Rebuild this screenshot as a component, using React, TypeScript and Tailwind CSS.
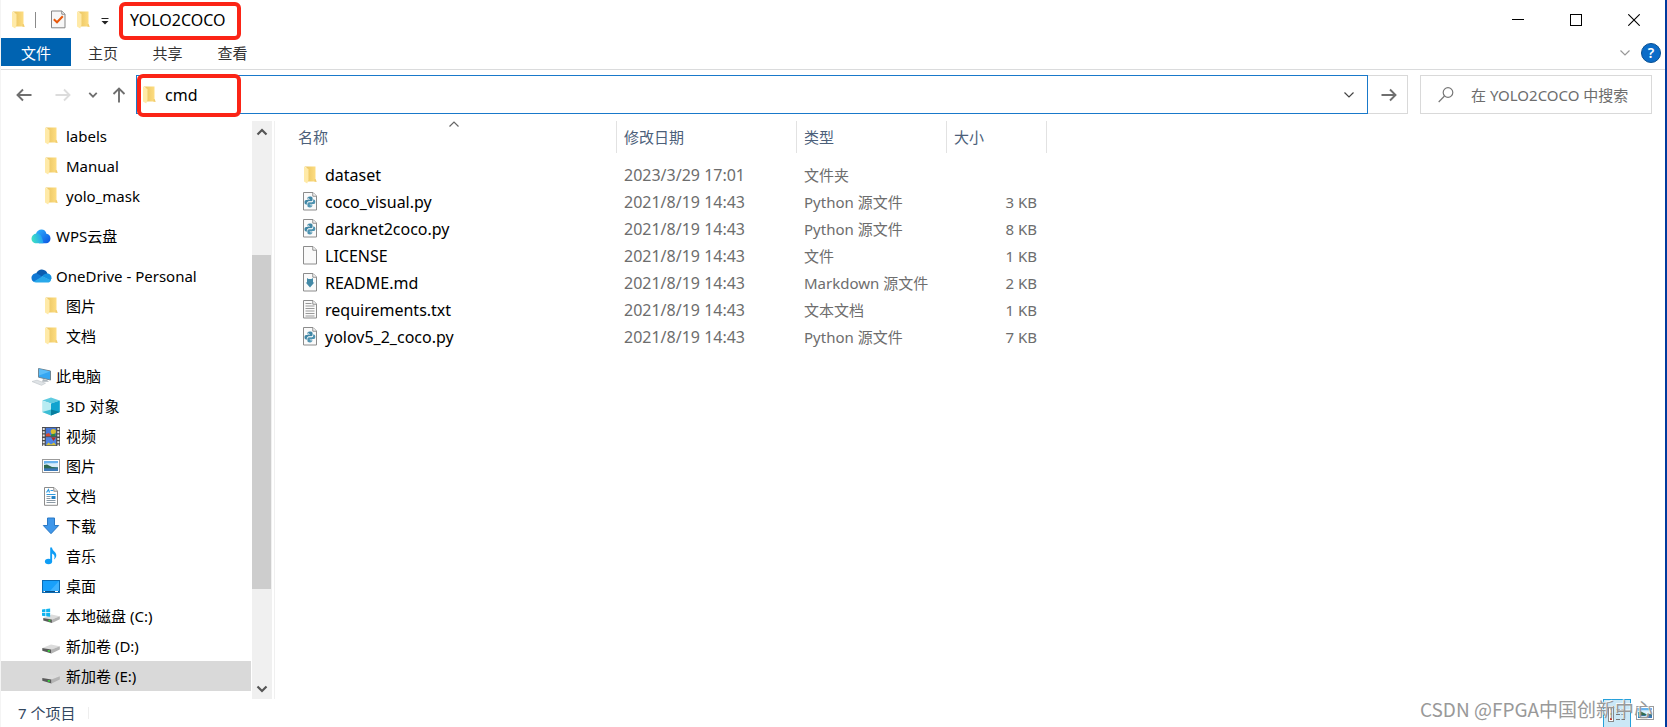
import type { ReactNode } from "react";

function FolderIcon() {
  return (
    <svg width="13" height="18" viewBox="0 0 13 18" aria-hidden="true">
      <defs>
        <linearGradient id="folderBack" x1="0" x2="1">
          <stop offset="0" stopColor="#e8c25c" />
          <stop offset="1" stopColor="#ffdf85" />
        </linearGradient>
      </defs>
      <path d="M0.5 0.5H11.5V13.5L12.5 15.5H3V2Z" fill="url(#folderBack)" />
      <path d="M0 0.5L4.5 3V14L3.2 17.5L0 15.5Z" fill="#ffeaa8" />
      <path d="M11.5 13L12.7 15.7H10.5V13Z" fill="#f0cb6c" />
    </svg>
  );
}

function PageIcon({ children }: { children?: ReactNode }) {
  return (
    <svg width="16" height="19" viewBox="0 0 16 19" aria-hidden="true">
      <path d="M1.5 0.5H11L14.5 4V18H1.5Z" fill="#fafafa" stroke="#8c8c8c" />
      <path d="M10.8 0.8V4.2H14.3" fill="#fff" stroke="#8c8c8c" />
      {children}
    </svg>
  );
}

function PythonIcon() {
  return (
    <PageIcon>
      <g transform="translate(2.5 4.6) scale(0.45)">
        <path
          d="M11.9 0C7.5 0 6.7 1.8 6.7 3.6V6.3H12.4V7.3H4C1.6 7.3 0 9.3 0 12.4S1.6 17.4 3.8 17.4H6V14.3C6 12 7.8 10.3 10 10.3H15.3C17 10.3 18 9 18 7.3V3.6C18 1.5 16 0 11.9 0Z"
          fill="#3f86a5"
        />
        <path
          d="M12.1 24C16.5 24 17.3 22.2 17.3 20.4V17.7H11.6V16.7H20C22.4 16.7 24 14.7 24 11.6S22.4 6.6 20.2 6.6H19V9.7C19 12 17.2 12.4 14 12.4H9.5C7.5 12.4 6.5 14 6.5 16.7V20.4C6.5 22.5 8 24 12.1 24Z"
          fill="#4f93b0"
        />
        <circle cx="9.3" cy="3.6" r="1.2" fill="#fff" />
        <circle cx="14.7" cy="20.4" r="1.2" fill="#fff" />
        <path d="M5.5 16C6 12 8.5 11.3 11 11.3H15.5C18 11.3 18.6 9 18.6 7" fill="none" stroke="#fff" strokeWidth="1" />
      </g>
    </PageIcon>
  );
}

function MarkdownIcon() {
  return (
    <PageIcon>
      <path d="M5 5L6.5 6H9.5L11 5V9.5H12.3L8 14.6L3.7 9.5H5Z" fill="#4389a6" />
    </PageIcon>
  );
}

function TextIcon() {
  return (
    <PageIcon>
      <path d="M3.5 3.5H9.5M3.5 6H12.5M3.5 8.5H12.5M3.5 11H12.5M3.5 13.5H12.5M3.5 16H12.5" stroke="#9a9a9a" />
    </PageIcon>
  );
}

function CheckPageIcon() {
  return (
    <svg width="16" height="19" viewBox="0 0 16 19" aria-hidden="true">
      <path d="M0.5 1H11L14 4V17.8H0.5Z" fill="#f7f7f7" stroke="#858585" />
      <path d="M10.8 1V4.2H14" fill="#fff" stroke="#858585" />
      <path d="M2.8 9.2L6 12.3L11.8 6.2" fill="none" stroke="#e8590c" strokeWidth="2" />
    </svg>
  );
}

function WpsIcon() {
  return (
    <svg width="20" height="15" viewBox="0 0 20 15" aria-hidden="true">
      <defs>
        <linearGradient id="wpsRight" x1="0" y1="0" x2="1" y2="1">
          <stop offset="0" stopColor="#2fb4ff" />
          <stop offset="1" stopColor="#0b52e0" />
        </linearGradient>
        <linearGradient id="wpsLeft" x1="0" y1="0.6" x2="1" y2="0.4">
          <stop offset="0" stopColor="#3fe3c2" />
          <stop offset="1" stopColor="#1f9cf8" />
        </linearGradient>
      </defs>
      <path d="M5 5C5.5 2 8 0.5 10.5 0.5C13 0.5 15 2 15.4 4.8C18 5.2 19.5 7 19.5 9.5C19.5 12.5 17.5 14.3 15 14.3H8Z" fill="url(#wpsRight)" />
      <path d="M5.5 4.5C8.5 4 11 6 12.5 14.3H5.5C2.5 14.3 0.5 12.3 0.5 9.5C0.5 7 2.5 4.8 5.5 4.5Z" fill="url(#wpsLeft)" />
    </svg>
  );
}

function OneDriveIcon() {
  return (
    <svg width="21" height="14" viewBox="0 0 21 14" aria-hidden="true">
      <path d="M5 4.5C6.5 1.5 9 0.3 11 0.5C13.8 0.7 15.8 2.2 16.5 4.8L10 8Z" fill="#0a5cb0" />
      <path d="M0.5 9C0.4 6.3 2.8 4 5.5 4.2L12 8L3 13C1.5 12.3 0.5 10.8 0.5 9Z" fill="#0f78d4" />
      <path d="M16.3 4.6C18.8 4.6 20.6 6.8 20.5 9.2L19.5 11.5L11 7.5C12.5 5.5 14 4.6 16.3 4.6Z" fill="#1490df" />
      <path d="M11.5 7.3L20 11.2C19.4 12.8 18.2 13.5 16.6 13.5H5C4.2 13.5 3.2 13.2 2.5 12.7Z" fill="#28a8ea" />
    </svg>
  );
}

function ComputerIcon() {
  return (
    <svg width="21" height="20" viewBox="-1 -2 21 20" aria-hidden="true">
      <path d="M6.5 0.5L18.5 3V12L6.5 9.2Z" fill="#35a6f2" stroke="#6f8796" />
      <path d="M7 1L18 3.4L7 7.5Z" fill="#5cbdf8" />
      <path d="M11 11L15 12L17 13.8H10Z" fill="#aeb6bc" />
      <path d="M0 13.5L5 12.2L13.5 15.2L9.5 17.3Z" fill="#dfe3e6" stroke="#c3c9cd" strokeWidth="0.7" />
    </svg>
  );
}

function CubeIcon() {
  return (
    <svg width="18" height="19" viewBox="0 0 18 19" aria-hidden="true">
      <path d="M0.2 3.5L9 0.4L17.8 3.5L9 6.5Z" fill="#5fcbe0" />
      <path d="M0.2 3.5L9 6.5V18.6L0.2 15Z" fill="#b8ecf2" />
      <path d="M17.8 3.5L9 6.5V18.6L17.8 15Z" fill="#10a3cf" />
      <path d="M0.2 15L9 12.5V18.6Z" fill="#3dbdd4" />
      <path d="M17.8 15L9 12.5V18.6Z" fill="#087e9e" />
    </svg>
  );
}

function VideoIcon() {
  return (
    <svg width="18" height="19" viewBox="0 0 18 19" aria-hidden="true">
      <rect width="18" height="19" fill="#4a4a4a" />
      <path d="M1.7 1V19M16.3 1V19" stroke="#e4e4e4" strokeWidth="2" strokeDasharray="2 1.3" />
      <rect x="3.8" y="0.8" width="10.4" height="8.4" fill="#4677d8" />
      <rect x="3.8" y="10.2" width="10.4" height="8" fill="#4f84e3" />
      <path d="M4 9.2V7L7 6L9 9.2Z" fill="#d94a2e" />
      <circle cx="11.3" cy="4.5" r="2.6" fill="#d9bd2f" />
      <path d="M9 7.5L13.5 6.5V9.2H9Z" fill="#2b8a3e" />
      <path d="M9 10.2L14 10.5L11.5 14Z" fill="#b52d22" />
      <path d="M4 18.2L6.5 15.5L9 17.5L12 15.5L14.2 18.2Z" fill="#d6c23a" />
    </svg>
  );
}

function PictureIcon() {
  return (
    <svg width="18" height="14" viewBox="0 0 18 14" aria-hidden="true">
      <rect x="0.5" y="0.5" width="17" height="13" fill="#fff" stroke="#9b9b9b" />
      <rect x="2" y="2" width="14" height="10" fill="#6ab4ee" />
      <path d="M2 5C5 3.5 8 5 16 4V8H2Z" fill="#d8eefb" />
      <path d="M2 6L5 5.5L10 8L16 8.6V10H2Z" fill="#2f6b52" />
      <path d="M2 9.3H16V12H2Z" fill="#3b79b8" />
    </svg>
  );
}

function DocumentIcon() {
  return (
    <svg width="16" height="19" viewBox="0 0 16 19" aria-hidden="true">
      <path d="M1.5 0.5H11L14.5 4V18.3H1.5Z" fill="#fff" stroke="#8c8c8c" />
      <path d="M10.8 0.8V4.2H14.3" fill="#eee" stroke="#8c8c8c" />
      <path d="M3.5 5.5L5.5 2.5L6.5 5.5M7.5 3.5H10M3.5 7.5H12.5" fill="none" stroke="#2f9be0" strokeWidth="1.2" />
      <path d="M3.5 9.5H7.5M3.5 11.5H7.5M3.5 13.5H12.5M3.5 15.5H12.5" stroke="#8c9aa5" />
      <rect x="8.5" y="9" width="4" height="3" fill="#2583c5" />
    </svg>
  );
}

function DownloadIcon() {
  return (
    <svg width="18" height="18" viewBox="0 0 18 18" aria-hidden="true">
      <path d="M5.5 1H12.5V8.5H16.7L9 16.7L1.3 8.5H5.5Z" fill="#3f97ea" stroke="#2a78c4" />
    </svg>
  );
}

function MusicIcon() {
  return (
    <svg width="18" height="18" viewBox="0 0 18 18" aria-hidden="true">
      <ellipse cx="6.5" cy="14.5" rx="3.6" ry="2.8" fill="#0f9df5" />
      <path d="M8.2 0.5H10C10.3 4 14.5 5 14.3 8.5C14.2 10.3 13.3 11.5 12 12.5C13.2 9.5 12.5 7.5 10.1 6.5V14.5H8.2Z" fill="#0f9df5" />
    </svg>
  );
}

function DesktopIcon() {
  return (
    <svg width="18" height="13" viewBox="0 0 18 13" aria-hidden="true">
      <rect x="0.5" y="0.5" width="17" height="12" fill="#18a0fb" stroke="#0b6cb5" />
      <path d="M8 11L17 1V11Z" fill="#3db2ff" />
      <path d="M1 11.5H17" stroke="#0a4f86" />
      <path d="M1.5 11.5H3M13 11.5H16" stroke="#fff" />
    </svg>
  );
}

function DriveBody() {
  return (
    <>
      <path d="M0.3 9L9 5.5L17.8 7.2L9.5 10.6Z" fill="#dcdcdc" />
      <path d="M0.3 9L9.5 10.6V14.5L0.3 11.8Z" fill="#5a5a5a" />
      <path d="M9.5 10.6L17.8 7.2V10.5L9.5 14.5Z" fill="#b4b4b4" />
      <rect x="5.8" y="11" width="2" height="1.8" fill="#35d63b" />
    </>
  );
}

function DriveIcon() {
  return (
    <svg width="18" height="16" viewBox="0 -1 18 16" aria-hidden="true">
      <DriveBody />
    </svg>
  );
}

function SystemDriveIcon() {
  return (
    <svg width="19" height="16" viewBox="-1 -1 19 16" aria-hidden="true">
      <DriveBody />
      <path d="M-1 0.2L2.6 -0.3V3H-1ZM3.4 -0.4L7.6 -1V3H3.4ZM-1 3.8H2.6V7.2L-1 6.7ZM3.4 3.8H7.6V7.8L3.4 7.3Z" fill="#10b4ef" />
    </svg>
  );
}

function Chevron({ up = false, bold = false, className = "" }: { up?: boolean; bold?: boolean; className?: string }) {
  return (
    <svg width="12" height="8" viewBox="0 0 12 8" fill="none" className={className} aria-hidden="true">
      <path d={up ? "M1.5 6.5L6 2L10.5 6.5" : "M1.5 1.5L6 6L10.5 1.5"} stroke="currentColor" strokeWidth={bold ? 2.2 : 1.2} />
    </svg>
  );
}

function Arrow({ className = "" }: { className?: string }) {
  return (
    <svg width="16" height="14" viewBox="0 0 16 14" fill="none" className={className} aria-hidden="true">
      <path d="M0.5 7H14.5M9 1.5L14.5 7L9 12.5" stroke="currentColor" strokeWidth="1.9" />
    </svg>
  );
}

type NavItem = { label: string; icon: ReactNode; top?: boolean; spaced?: boolean; selected?: boolean };

const navItems: NavItem[] = [
  { label: "labels", icon: <FolderIcon /> },
  { label: "Manual", icon: <FolderIcon /> },
  { label: "yolo_mask", icon: <FolderIcon /> },
  { label: "WPS云盘", icon: <WpsIcon />, top: true, spaced: true },
  { label: "OneDrive - Personal", icon: <OneDriveIcon />, top: true, spaced: true },
  { label: "图片", icon: <FolderIcon /> },
  { label: "文档", icon: <FolderIcon /> },
  { label: "此电脑", icon: <ComputerIcon />, top: true, spaced: true },
  { label: "3D 对象", icon: <CubeIcon /> },
  { label: "视频", icon: <VideoIcon /> },
  { label: "图片", icon: <PictureIcon /> },
  { label: "文档", icon: <DocumentIcon /> },
  { label: "下载", icon: <DownloadIcon /> },
  { label: "音乐", icon: <MusicIcon /> },
  { label: "桌面", icon: <DesktopIcon /> },
  { label: "本地磁盘 (C:)", icon: <SystemDriveIcon /> },
  { label: "新加卷 (D:)", icon: <DriveIcon /> },
  { label: "新加卷 (E:)", icon: <DriveIcon />, selected: true },
];

const files = [
  { name: "dataset", icon: <FolderIcon />, date: "2023/3/29 17:01", type: "文件夹", size: "" },
  { name: "coco_visual.py", icon: <PythonIcon />, date: "2021/8/19 14:43", type: "Python 源文件", size: "3 KB" },
  { name: "darknet2coco.py", icon: <PythonIcon />, date: "2021/8/19 14:43", type: "Python 源文件", size: "8 KB" },
  { name: "LICENSE", icon: <PageIcon />, date: "2021/8/19 14:43", type: "文件", size: "1 KB" },
  { name: "README.md", icon: <MarkdownIcon />, date: "2021/8/19 14:43", type: "Markdown 源文件", size: "2 KB" },
  { name: "requirements.txt", icon: <TextIcon />, date: "2021/8/19 14:43", type: "文本文档", size: "1 KB" },
  { name: "yolov5_2_coco.py", icon: <PythonIcon />, date: "2021/8/19 14:43", type: "Python 源文件", size: "7 KB" },
];

function TitleBar() {
  return (
    <header className="flex h-[38px] items-center">
      <div className="flex items-center pt-px pl-[11px]">
        <FolderIcon />
        <span className="ml-[10px] h-4 w-px bg-[#8a8a8a]" />
        <button aria-label="属性" className="ml-[15px]"><CheckPageIcon /></button>
        <button aria-label="新建文件夹" className="ml-[10px]"><FolderIcon /></button>
        <button aria-label="自定义快速访问工具栏" className="ml-[11px] pt-1">
          <svg width="8" height="7" viewBox="0 0 8 7" aria-hidden="true">
            <path d="M0.5 0.5H7.5" stroke="#222" />
            <path d="M0.5 3H7.5L4 6.5Z" fill="#222" />
          </svg>
        </button>
      </div>
      <div className="relative ml-[10px] flex h-[38px] w-[122px] items-center pt-px pl-[11px]">
        <h1 className="text-base text-black">YOLO2COCO</h1>
        <span className="pointer-events-none absolute inset-x-0 top-0.5 bottom-[-2px] rounded-md border-4 border-[#fb2416]" />
      </div>
      <div className="ml-auto flex pt-px pr-0.5">
        <button aria-label="最小化" className="flex h-9 w-[58px] items-center justify-center">
          <svg width="12" height="12" viewBox="0 0 12 12" aria-hidden="true"><path d="M0 5.5H12" stroke="#000" /></svg>
        </button>
        <button aria-label="最大化" className="flex h-9 w-[58px] items-center justify-center">
          <svg width="12" height="12" viewBox="0 0 12 12" aria-hidden="true"><rect x="0.5" y="0.5" width="11" height="11" fill="none" stroke="#000" /></svg>
        </button>
        <button aria-label="关闭" className="flex h-9 w-[58px] items-center justify-center">
          <svg width="12" height="12" viewBox="0 0 12 12" aria-hidden="true"><path d="M0.3 0.3L11.7 11.7M11.7 0.3L0.3 11.7" stroke="#000" strokeWidth="1.1" /></svg>
        </button>
      </div>
    </header>
  );
}

function RibbonTabs() {
  return (
    <nav className="flex h-8 items-start border-b border-[#dadbdc]">
      <button className="h-7 w-[70px] bg-[#0063b1] pt-0.5 text-white">文件</button>
      <button className="h-7 w-16 pt-0.5 text-[#333]">主页</button>
      <button className="h-7 w-[65px] pt-0.5 text-[#333]">共享</button>
      <button className="h-7 w-[65px] pt-0.5 text-[#333]">查看</button>
      <div className="ml-auto flex items-center gap-[9px] pt-[5px] pr-1">
        <button aria-label="展开功能区" className="text-[#999]"><Chevron className="w-3.5" /></button>
        <button aria-label="帮助" className="flex size-5 items-center justify-center rounded-full border border-[#084f92] bg-[#0b6cc8] text-sm font-semibold text-white">?</button>
      </div>
    </nav>
  );
}

function AddressRow() {
  return (
    <div className="flex items-center pt-[5px] pr-[13px] pb-[7px] text-[#6f6f6f]">
      <div className="flex w-[135px] items-center pl-[15px]">
        <button aria-label="后退"><Arrow className="rotate-180" /></button>
        <button aria-label="前进" className="ml-[23px] text-[#dcdcdc]"><Arrow /></button>
        <button aria-label="最近浏览的位置" className="ml-[17px]"><Chevron className="w-[10px]" bold /></button>
        <button aria-label="上移" className="ml-[13px] pt-px"><Arrow className="-rotate-90" /></button>
      </div>
      <div className="relative flex h-[39px] flex-1 items-center border border-[#1979ca]">
        <label htmlFor="address" className="pl-1.5"><FolderIcon /></label>
        <input id="address" aria-label="地址" defaultValue="cmd" className="ml-[9px] min-w-0 flex-1 bg-transparent text-base text-black outline-none" />
        <button aria-label="上一个位置" className="mr-3 text-[#444]"><Chevron /></button>
        <span className="pointer-events-none absolute -top-0.5 -bottom-1 left-0 w-[104px] rounded-md border-4 border-[#fb2416]" />
      </div>
      <button aria-label="转到" className="flex h-[39px] w-10 items-center justify-center border border-l-0 border-[#d9d9d9] pl-0.5"><Arrow /></button>
      <div className="ml-3 flex h-[39px] w-[232px] items-center border border-[#d9d9d9]">
        <label htmlFor="search" className="pl-[17px]">
          <svg width="16" height="16" viewBox="0 0 16 16" fill="none" stroke="#777" strokeWidth="1.2" aria-hidden="true">
            <circle cx="10" cy="5.5" r="4.8" />
            <path d="M6.5 9L0.7 15" />
          </svg>
        </label>
        <input id="search" aria-label="搜索" placeholder="在 YOLO2COCO 中搜索" className="ml-[17px] min-w-0 flex-1 bg-transparent outline-none placeholder:text-[#6d6d6d]" />
      </div>
    </div>
  );
}

function Sidebar() {
  return (
    <div className="flex w-[274px] shrink-0 border-r border-[#f0f0f0]">
      <nav className="w-[250px]">
        {navItems.map((item, i) => (
          <a
            key={i}
            href="#"
            className={`flex h-[30px] items-center text-black ${item.top ? "gap-1 pl-[30px]" : "gap-[6px] pl-[41px]"} ${item.spaced ? "mt-[10px]" : ""} ${item.selected ? "bg-[#d9d9d9]" : ""}`}
          >
            <span className={`flex items-center ${item.top ? "w-[21px]" : "w-[18px] justify-center"}`}>{item.icon}</span>
            {item.label}
          </a>
        ))}
      </nav>
      <div className="ml-px flex w-5 flex-col items-center bg-[#f0f0f0] text-[#555]">
        <button aria-label="向上滚动" className="flex h-[21px] items-center"><Chevron up bold /></button>
        <div className="mt-[113px] h-[334px] w-full border-r border-[#f0f0f0] bg-[#cdcdcd]" />
        <button aria-label="向下滚动" className="mt-auto flex h-[21px] items-center"><Chevron bold /></button>
      </div>
    </div>
  );
}

function FileTable() {
  return (
    <main className="flex-1">
      <table className="w-[772px] table-fixed border-collapse text-left">
        <colgroup>
          <col className="w-[342px]" />
          <col className="w-[180px]" />
          <col className="w-[150px]" />
          <col className="w-[100px]" />
        </colgroup>
        <thead className="text-[#4c607a]">
          <tr>
            <th className="p-0 pb-2 font-normal">
              <div className="relative flex h-8 items-center border-r border-[#e2e2e2] pl-[23px]">
                名称
                <Chevron up className="absolute -top-px left-[173px] text-[#666]" />
              </div>
            </th>
            {["修改日期", "类型", "大小"].map((label) => (
              <th key={label} className="p-0 pb-2 font-normal">
                <div className="flex h-8 items-center border-r border-[#e2e2e2] pl-[7px]">{label}</div>
              </th>
            ))}
          </tr>
        </thead>
        <tbody className="text-[#6d6d6d]">
          {files.map((file) => (
            <tr key={file.name} className="h-[27px]">
              <td className="p-0 pl-[27px]">
                <div className="flex h-[27px] items-center text-base text-black">
                  <span className="mr-[7px] flex w-4 justify-center">{file.icon}</span>
                  {file.name}
                </div>
              </td>
              <td className="p-0 pl-[7px] text-base/6">{file.date}</td>
              <td className="p-0 pl-[7px]">{file.type}</td>
              <td className="p-0 pr-[10px] text-right">{file.size}</td>
            </tr>
          ))}
        </tbody>
      </table>
    </main>
  );
}

function StatusBar() {
  return (
    <footer className="relative flex h-7 items-center pl-[17px] text-[#33475f]">
      <span className="flex h-3 items-center border-r border-[#eee] pr-[13px]">7 个项目</span>
      <div className="ml-auto flex h-7 items-center pr-[11px]">
        <button aria-label="详细信息" className="flex h-7 w-7 items-center justify-center border border-b-0 border-[#26a0da] bg-[#cbe8f6]">
          <svg width="18" height="16" viewBox="0 0 18 16" aria-hidden="true">
            <rect x="0.5" y="0.5" width="5" height="15" fill="#fff" stroke="#888" />
            <path d="M2 3H4" stroke="#4a6fb0" strokeWidth="2" />
            <path d="M2 8H4" stroke="#3b8f4a" strokeWidth="2" />
            <path d="M2 13H4" stroke="#c0392b" strokeWidth="2" />
            <path d="M8 3.5H12M13.5 3.5H17M8 8.5H12M13.5 8.5H17M8 13.5H12M13.5 13.5H17" stroke="#777" />
          </svg>
        </button>
        <button aria-label="大缩略图" className="ml-[5px]"><PictureIcon /></button>
      </div>
      <span className="pointer-events-none absolute right-3 bottom-1.5 text-[19px] whitespace-nowrap text-[#999] [text-shadow:-1px_-1px_0_#ffffffcc] font-['Noto_Sans_CJK_SC',sans-serif]">
        CSDN @FPGA中国创新中心
      </span>
    </footer>
  );
}

export default function App() {
  return (
    <div className="flex min-h-screen flex-col border-r-2 border-l border-r-[#003a9e] border-l-[#f4f4f4] bg-white text-[15px]/6 font-['Noto_Sans','Noto_Sans_CJK_SC',sans-serif]">
      <TitleBar />
      <RibbonTabs />
      <AddressRow />
      <div className="flex flex-1">
        <Sidebar />
        <FileTable />
      </div>
      <StatusBar />
    </div>
  );
}
